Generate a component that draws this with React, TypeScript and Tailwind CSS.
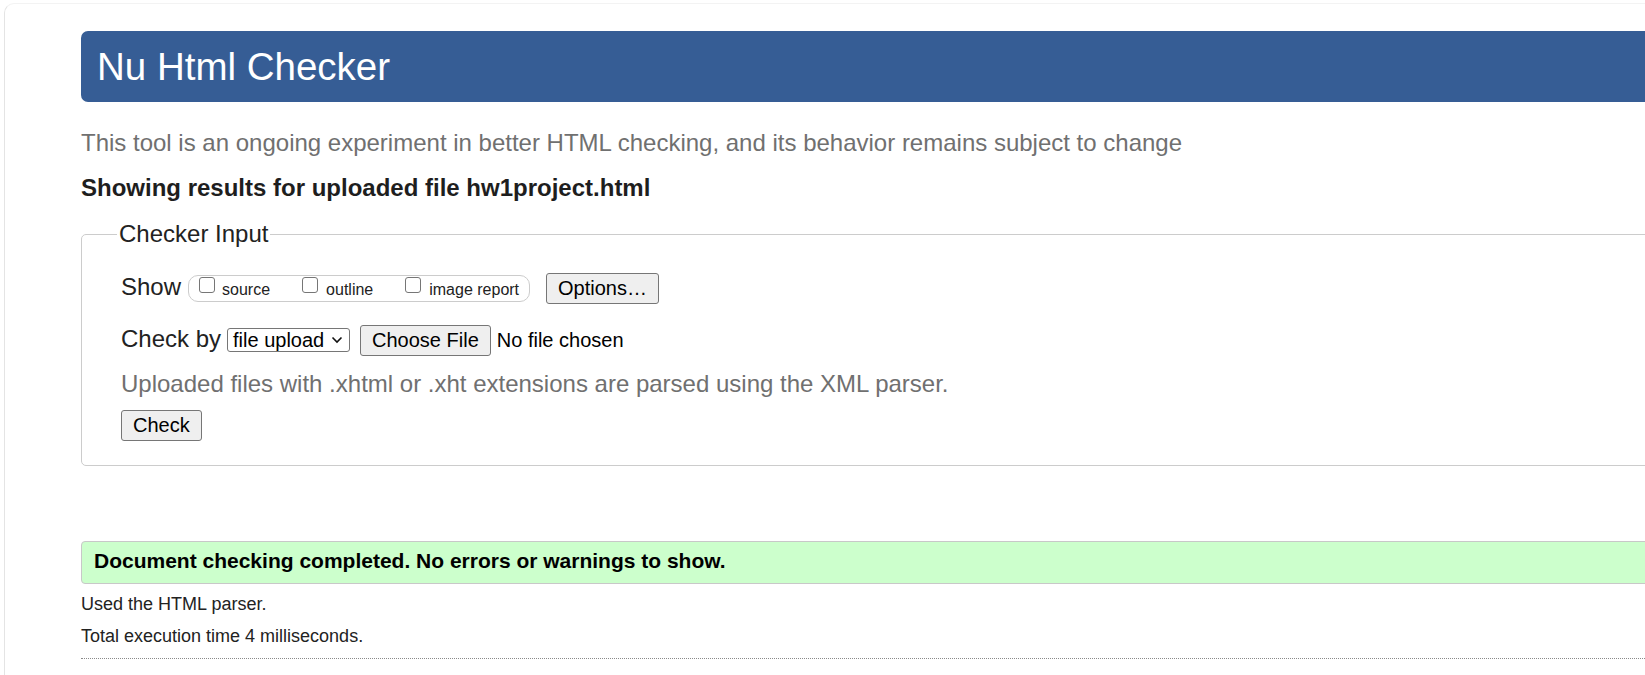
import React from 'react';

function CheckBox({ className = '' }: { className?: string }) {
  return (
    <span
      className={`inline-block h-[16px] w-[16px] -translate-y-[2px] rounded-[3px] border border-[#767676] bg-white ${className}`}
    />
  );
}

function Btn({ children, className = '' }: { children: React.ReactNode; className?: string }) {
  return (
    <button
      className={`rounded-[3px] border border-[#767676] bg-[#efefef] px-[11px] py-[2px] text-[20px] leading-[25px] text-black ${className}`}
    >
      {children}
    </button>
  );
}

export default function App() {
  return (
    <div className="h-[675px] overflow-hidden bg-white font-['Liberation_Sans',Arial,sans-serif] text-[#222]">
      <div className="mt-[3px] ml-[4px] -mr-[40px] h-[700px] rounded-tl-[10px] border-t border-l border-t-[#f3f3f3] border-l-[#e4e4e4] pt-[27px] pl-[76px]">
        {/* Title */}
        <h1 className="rounded-[7px] bg-[#365d95] py-[14px] pl-[16px] text-[38.5px] leading-[43px] font-normal text-white">
          Nu Html Checker
        </h1>

        <p className="mt-[27px] text-[24px] leading-[28px] text-[#707070]">
          This tool is an ongoing experiment in better HTML checking, and its behavior remains subject to change
        </p>
        <p className="mt-[17px] text-[24px] leading-[28px] font-bold text-[#1e1e1e]">
          Showing results for uploaded file hw1project.html
        </p>

        {/* Checker input */}
        <fieldset className="mt-[18px] rounded-[5px] border border-[#cccccc] pt-[25px] pb-[24px] pl-[35px]">
          <legend className="px-[2px] text-[24px] leading-[28px]">Checker Input</legend>
          <div className="pl-[4px]">
            <div className="flex items-baseline">
              <span className="text-[24px] leading-[28px]">Show</span>
              <span className="ml-[7px] inline-flex items-baseline rounded-[10px] border border-[#cccccc] pt-[3px] pr-[10px] pb-[2px] pl-[10px] text-[16px] leading-[18px]">
                <CheckBox />
                <span className="ml-[7px]">source</span>
                <CheckBox className="ml-[32px]" />
                <span className="ml-[8px]">outline</span>
                <CheckBox className="ml-[32px]" />
                <span className="ml-[8px]">image report</span>
              </span>
              <Btn className="ml-[16px]">Options…</Btn>
            </div>

            <div className="mt-[21px] flex items-baseline">
              <span className="text-[24px] leading-[28px]">Check by</span>
              <span className="ml-[6px] inline-flex h-[24px] w-[123px] items-center justify-between rounded-[3px] border border-[#767676] pr-[6px] pl-[5px] text-[20px] leading-[20px] text-black">
                file upload
                <svg width="12" height="8" viewBox="0 0 12 8" fill="none">
                  <path d="M1.5 1.5 L6 6 L10.5 1.5" stroke="#111" strokeWidth="1.6" />
                </svg>
              </span>
              <Btn className="ml-[10px]">Choose File</Btn>
              <span className="ml-[6px] text-[20px] leading-[24px] text-black">No file chosen</span>
            </div>

            <p className="mt-[13.6px] text-[24px] leading-[28px] text-[#707070]">
              Uploaded files with .xhtml or .xht extensions are parsed using the XML parser.
            </p>

            <Btn className="mt-[12px] block">Check</Btn>
          </div>
        </fieldset>

        {/* Result */}
        <div className="mt-[75px] rounded-[4px] border border-[#c8c8c8] bg-[#ccffcc] pt-[6px] pb-[10px] pl-[12px] text-[21px] leading-[25px] font-bold text-black">
          Document checking completed. No errors or warnings to show.
        </div>
        <p className="mt-[9.5px] text-[18px] leading-[22px]">Used the HTML parser.</p>
        <p className="mt-[10px] text-[18px] leading-[22px]">Total execution time 4 milliseconds.</p>
        <hr className="mt-[11px] border-t border-dotted border-[#8a8a8a]" />
      </div>
    </div>
  );
}
